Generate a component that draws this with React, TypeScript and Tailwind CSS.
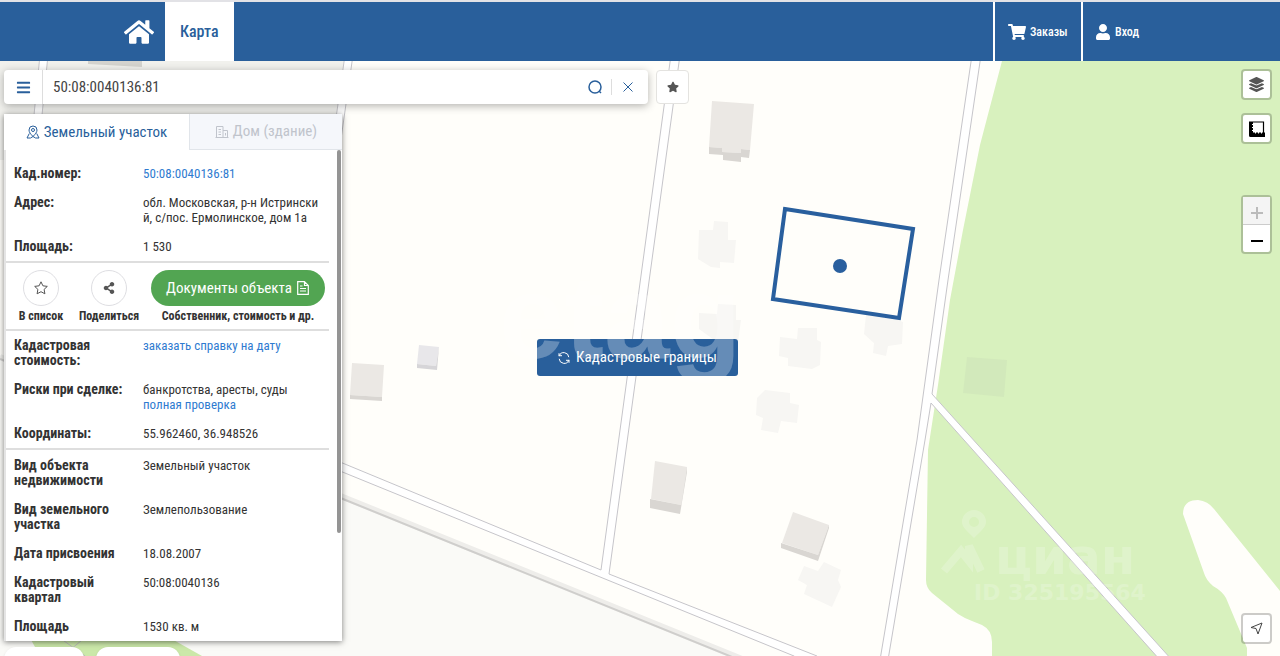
import type { ReactNode } from "react";
import { FaBars, FaHome, FaLayerGroup, FaShareAlt, FaShoppingCart, FaStar, FaUser } from "react-icons/fa";

interface Field {
  label: string;
  value: ReactNode;
}

const linkClass = "text-[#2f7bd0] hover:underline";

const mainFields: Field[] = [
  {
    label: "Кад.номер:",
    value: (
      <a href="#number" className={linkClass}>
        50:08:0040136:81
      </a>
    ),
  },
  { label: "Адрес:", value: "обл. Московская, р-н Истринский, с/пос. Ермолинское, дом 1а" },
  { label: "Площадь:", value: "1 530" },
];

const priceFields: Field[] = [
  {
    label: "Кадастровая стоимость:",
    value: (
      <a href="#price" className={linkClass}>
        заказать справку на дату
      </a>
    ),
  },
  {
    label: "Риски при сделке:",
    value: (
      <>
        банкротства, аресты, суды
        <br />
        <a href="#check" className={linkClass}>
          полная проверка
        </a>
      </>
    ),
  },
  { label: "Координаты:", value: "55.962460, 36.948526" },
];

const infoFields: Field[] = [
  { label: "Вид объекта недвижимости", value: "Земельный участок" },
  { label: "Вид земельного участка", value: "Землепользование" },
  { label: "Дата присвоения", value: "18.08.2007" },
  { label: "Кадастровый квартал", value: "50:08:0040136" },
  { label: "Площадь", value: "1530 кв. м" },
];

function FieldList({ fields }: { fields: Field[] }) {
  return (
    <dl>
      {fields.map((field) => (
        <div key={field.label} className="flex py-[7px] pl-2 text-[13px] leading-[15px]">
          <dt className="w-[129px] shrink-0 pr-2 text-sm leading-[15px] font-bold text-[#333]">{field.label}</dt>
          <dd className="w-44 break-all text-[#333]">{field.value}</dd>
        </div>
      ))}
    </dl>
  );
}

function PlotIcon() {
  return (
    <svg className="size-[14px]" viewBox="0 0 14 14" fill="none" stroke="currentColor">
      <path d="M7 11.500C4.600 9 3 7.200 3 5a4 4 0 0 1 8 0c0 2.200-1.600 4-4 6.500Z" />
      <circle cx="7" cy="5" r="1.500" />
      <path d="M3.300 8.500 1 13h3.500L7 11.500 9.500 13H13l-2.300-4.500" />
    </svg>
  );
}

function HouseIcon() {
  return (
    <svg className="size-[14px]" viewBox="0 0 14 14" fill="none" stroke="currentColor">
      <path d="M1.500 12.500v-11h6.500v11M8 5.500h4.500v7M.5 12.500h13M3.500 4.500h2.500M3.500 7h2.500M3.500 9.500h2.500M10.500 8v2.500" />
    </svg>
  );
}

function DocumentIcon() {
  return (
    <svg className="size-[14px]" viewBox="0 0 14 14" fill="none" stroke="currentColor" strokeWidth="1.200">
      <path d="M8.500.700H1.700v12.600h10.600V4.500L8.500.700v3.800h3.800M4 5h2.500M4 7.500h6M4 10h6" />
    </svg>
  );
}

function RefreshIcon() {
  return (
    <svg className="size-3" viewBox="0 0 12 12" fill="none" stroke="currentColor">
      <path d="M1 4.200V1.200M1 3.700h3M1.200 3.700A5 5 0 0 1 10.800 5.200M11 7.800v3M11 8.300H8M10.800 8.300A5 5 0 0 1 1.200 6.800" />
    </svg>
  );
}

function RulerIcon() {
  return (
    <svg className="size-4" viewBox="0 0 16 16" fill="none" stroke="currentColor">
      <path d="M0 .500h4v11h12V16H1.500A1.500 1.500 0 0 1 0 14.500Z" fill="currentColor" stroke="none" />
      <path d="M4 1h10.500v11" strokeWidth="1.200" />
      <path d="M3 3.500H4.500M3 6.500H4.500M3 9.500H4.500M6.500 11v1.500M9.500 11v1.500M12.500 11v1.500" stroke="white" />
    </svg>
  );
}

const solidRoofs = [
  "712,101 754,104 750,150 741,149 741,153 722,152 722,148 709,147",
  "352,363 384,365 382,397 350,395",
  "655,461 687,467 681,505 651,499",
  "793,512 829,525 818,555 782,543",
];

const solidWalls = [
  "709,147 722,148 722,152 741,153 741,149 750,150 749,158 741,157 741,162 723,160 723,155 709,154",
  "350,395 382,397 382,401 350,399",
  "650,499 681,505 687,467 687,472 680,514 650,508",
  "781,543 818,555 829,525 829,528 818,561 781,548",
];

const faintBuildings = [
  "714,221 728,222 728,240 736,240 734,263 720,262 720,268 711,267 698,259 699,230 713,230",
  "718,304 736,305 736,320 741,320 738,342 717,342 699,329 699,313 717,314",
  "798,328 817,328 817,340 821,342 820,365 812,369 788,366 788,358 779,356 780,337 797,339",
  "875,312 888,316 903,322 902,344 888,346 886,356 873,353 874,343 864,334 866,315",
  "765,390 790,393 790,403 799,405 797,423 781,421 778,433 761,430 763,418 756,415 757,398",
  "824,562 841,570 838,580 841,587 832,607 804,594 807,585 798,580 804,566 818,571",
];

function MapCanvas() {
  return (
    <svg
      className="absolute inset-0 size-full"
      viewBox="0 61 1280 595"
      preserveAspectRatio="xMidYMid slice"
      role="img"
      aria-label="Карта участка"
    >
      <rect y="61" width="1280" height="595" fill="#fffefa" />
      <path d="M0 355 343 497 737 656H0Z" fill="#fafaf7" />
      <path d="M0 61H345L330 160H0Z" fill="#f1f1ed" />
      <path d="M88 61H142V67L88 64Z" fill="#d4d3ce" />

      {/* Forest */}
      <path
        d="M1002 61 980 145 963 230 950 300 938 385 928 450 926 580Q926 588 932 593L958 614Q964 618 972 621L982 625Q992 630 992 642V656H1280V61Z"
        fill="#d8f1be"
      />
      <path
        d="M1183 514C1183 504 1189 500 1198 500Q1208 501 1214 509L1280 591V656H1247V648L1226 598Q1222 591 1213 586 1206 580 1204 573Z"
        fill="#fffefa"
      />
      <path d="M30 638 170 638 202 656H40Z" fill="#cbe8a9" />
      <path d="M60 638 85 656M82 640 70 650" stroke="#bbb" />

      {/* Roads */}
      <g fill="white" stroke="#c6c5ca">
        <path d="M345 55 330 160 338 160 353 55ZM40 55 34 115H42L48 55Z" />
        <path d="M340 462 601 570 671 55H680L609 574 817 656 830 670H812L794 656 340 471Z" />
        <path d="M972 55 939 280 917 440 880 660H888L925 440 931 403 1160 660H1172L932 394 948 280 981 55Z" />
      </g>
      <path d="M0 357 343 497 742 659" fill="none" stroke="#eeedea" strokeWidth="6" />
      <path d="M0 359 343 499 742 661" fill="none" stroke="#cfcecc" strokeWidth="2" />

      {/* Buildings */}
      {solidRoofs.map((points) => (
        <polygon key={points} points={points} fill="#ebe8e4" />
      ))}
      {solidWalls.map((points) => (
        <polygon key={points} points={points} fill="#d9d6d2" />
      ))}
      <polygon points="419,345 439,347 436,366 417,364" fill="#e8e7ea" />
      <polygon points="417,364 436,366 439,347 437,370 417,368" fill="#d6d5d8" />
      {faintBuildings.map((points) => (
        <polygon key={points} points={points} fill="#f7f6f3" />
      ))}
      <polygon points="967,357 1007,360 1004,397 963,393" fill="#d2e9bb" />

      {/* Selected plot */}
      <polygon points="785,209 913,229 899,318 773,299" fill="none" stroke="#295f9e" strokeWidth="4" />
      <circle cx="840" cy="266" r="7" fill="#295f9e" />
    </svg>
  );
}

function Watermark() {
  return (
    <svg
      className="pointer-events-none absolute inset-0 size-full font-['Liberation_Sans',sans-serif] font-bold"
      viewBox="0 61 1280 595"
      preserveAspectRatio="xMidYMid slice"
      fill="white"
      aria-hidden="true"
    >
      <text x="499" y="358" fontSize="118" opacity=".28">
        etag
      </text>
      <g opacity=".2" className="font-['DejaVu_Sans',sans-serif]">
        <path
          d="M974 510a12 12 0 0 1 12 12c0 5-5 9-12 16-7-7-12-11-12-16a12 12 0 0 1 12-12Zm0 7a5 5 0 1 0 0 10 5 5 0 0 0 0-10Z"
          fillRule="evenodd"
        />
        <path d="M944 571 961 551 969 561V546L981 571" fill="none" stroke="white" strokeWidth="8" />
        <text x="995" y="574" fontSize="50">
          циан
        </text>
        <text x="974" y="600" fontSize="22">
          ID 325195564
        </text>
      </g>
    </svg>
  );
}

function Header() {
  return (
    <header className="flex h-[61px] shrink-0 border-t-2 border-[#e2e2e6] bg-[#295f9b] text-white">
      <nav className="flex flex-1 pl-[124px]">
        <a href="#home" aria-label="Главная" className="flex items-center pr-[11px]">
          <FaHome className="size-[30px]" />
        </a>
        <a href="#map" className="flex items-center bg-white px-[15px] text-base font-medium text-[#295f9b]">
          Карта
        </a>
      </nav>
      <a href="#orders" className="flex w-[88px] items-center gap-1 border-l-2 border-white pl-[13px] text-xs font-medium">
        <FaShoppingCart className="size-[18px]" />
        Заказы
      </a>
      <a href="#login" className="flex w-[199px] items-center gap-1 border-l-2 border-white pl-3 text-xs font-medium">
        <FaUser className="size-4" />
        Вход
      </a>
    </header>
  );
}

function SearchBar() {
  return (
    <div className="flex gap-2">
      <form className="flex h-[34px] flex-1 items-center rounded-sm bg-white text-[#295f9b] shadow-[0_2px_8px_rgba(0,0,0,0.3)]">
        <button type="button" aria-label="Меню" className="flex h-full w-[39px] items-center justify-center border-r border-[#ddd]">
          <FaBars className="size-[15px]" />
        </button>
        <input
          aria-label="Поиск"
          defaultValue="50:08:0040136:81"
          className="min-w-0 flex-1 px-[10px] text-[15px] text-[#444] outline-none"
        />
        <button type="submit" aria-label="Найти" className="flex h-4 w-[26px] items-center justify-center border-r border-[#ddd] pr-2">
          <svg className="size-4 shrink-0" viewBox="0 0 16 16" fill="none" stroke="currentColor" strokeWidth="1.500">
            <circle cx="8" cy="8" r="6" />
            <path d="m12 12 2 2" />
          </svg>
        </button>
        <button type="button" aria-label="Очистить" className="mr-[15px] ml-[11px]">
          <svg className="size-[10px]" viewBox="0 0 10 10" stroke="currentColor">
            <path d="m.500.500 9 9m0-9-9 9" />
          </svg>
        </button>
      </form>
      <button
        type="button"
        aria-label="Избранное"
        className="flex w-[33px] items-center justify-center rounded-sm border border-[#e4e3e0] bg-white text-[#555]"
      >
        <FaStar className="size-3" />
      </button>
    </div>
  );
}

function RoundAction({ label, children }: { label: string; children: ReactNode }) {
  return (
    <button type="button" className="flex w-[68px] flex-col items-center gap-1 text-xs leading-3 font-bold">
      <span className="flex size-9 items-center justify-center rounded-full border border-[#dedee2] bg-white text-[#555]">
        {children}
      </span>
      {label}
    </button>
  );
}

function ObjectPanel() {
  return (
    <section className="mt-[10px] flex min-h-0 w-[338px] flex-1 flex-col bg-white text-[#333] shadow-[0_1px_6px_rgba(0,0,0,0.5)]">
      <div role="tablist" className="flex h-9 shrink-0 text-[15px]">
        <button type="button" role="tab" aria-selected="true" className="flex w-[185px] items-center justify-center gap-1 text-[#295f9b]">
          <PlotIcon />
          Земельный участок
        </button>
        <button
          type="button"
          role="tab"
          aria-selected="false"
          className="flex flex-1 items-center justify-center gap-1 border-b border-l border-[#e1e5ea] bg-[#f5f7fb] text-[#c0c4cc]"
        >
          <HouseIcon />
          Дом (здание)
        </button>
      </div>
      <div className="flex min-h-0 flex-1 border-l-2 border-[#e4e4e4]">
        <div className="min-w-0 flex-1 overflow-hidden pr-2">
          <div className="border-b-2 border-[#dedede] pt-[9px]">
            <FieldList fields={mainFields} />
          </div>
          <div className="flex items-start justify-between border-b-2 border-[#dedede] pt-[7px] pr-1 pb-[7px] pl-px">
            <div className="flex">
              <RoundAction label="В список">
                <svg className="size-[14px]" viewBox="0 0 14 14" fill="none" stroke="currentColor">
                  <path d="m7 .800 1.900 4 4.400.600-3.200 3 .800 4.400L7 10.700l-3.900 2.100.800-4.400-3.200-3 4.400-.600Z" />
                </svg>
              </RoundAction>
              <RoundAction label="Поделиться">
                <FaShareAlt className="size-3" />
              </RoundAction>
            </div>
            <button type="button" className="flex flex-col items-center gap-1 text-xs leading-3 font-bold">
              <span className="flex h-9 w-[174px] items-center justify-center gap-1 rounded-full bg-[#52a552] text-[15px] font-normal text-white">
                Документы объекта
                <DocumentIcon />
              </span>
              Собственник, стоимость и др.
            </button>
          </div>
          <div className="border-b-2 border-[#dedede]">
            <FieldList fields={priceFields} />
          </div>
          <div className="pt-px">
            <FieldList fields={infoFields} />
          </div>
        </div>
        <div className="mr-px h-[78%] w-1 shrink-0 rounded-full bg-[#949494]" />
      </div>
    </section>
  );
}

function MapControls() {
  const box = "flex size-[31px] items-center justify-center rounded-[4px] border-2 border-black/20 bg-white bg-clip-padding";
  return (
    <div className="flex flex-col items-end">
      <button type="button" aria-label="Слои" className={`${box} text-[#555]`}>
        <FaLayerGroup className="size-[15px]" />
      </button>
      <button type="button" aria-label="Измерить" className={`${box} mt-[13px] text-black`}>
        <RulerIcon />
      </button>
      <div className="mt-[51px] flex w-[31px] flex-col rounded-[4px] border-2 border-black/20 bg-white bg-clip-padding">
        <button type="button" disabled aria-label="Приблизить" className="flex h-7 items-center justify-center border-b border-[#ccc] bg-[#f4f4f4] pt-1 text-[#bbb]">
          <svg className="size-3" viewBox="0 0 12 12" stroke="currentColor" strokeWidth="2">
            <path d="M0 6h12M6 0v12" />
          </svg>
        </button>
        <button type="button" aria-label="Отдалить" className="flex h-[27px] items-center justify-center pt-1 text-black">
          <svg className="size-3" viewBox="0 0 12 12" stroke="currentColor" strokeWidth="2">
            <path d="M0 6h12" />
          </svg>
        </button>
      </div>
      <button type="button" aria-label="Моё местоположение" className={`${box} mt-auto text-[#444]`}>
        <svg className="size-[13px]" viewBox="0 0 13 13" fill="none" stroke="currentColor" strokeLinejoin="round">
          <path d="M12 1 1 5.500 6 6.500 8 12Z" />
        </svg>
      </button>
    </div>
  );
}

export default function App() {
  return (
    <div className="flex h-screen flex-col overflow-hidden font-['Roboto_Condensed',Roboto,sans-serif]">
      <Header />
      <main className="relative flex min-h-0 flex-1">
        <MapCanvas />
        <div className="relative flex min-w-0 flex-1 justify-between pr-2 pl-1">
          <div className="flex w-[685px] flex-col pt-[9px] pb-[15px]">
            <SearchBar />
            <ObjectPanel />
          </div>
          <div className="flex pt-2 pb-3">
            <MapControls />
          </div>
        </div>

        <div className="pointer-events-none absolute inset-0 flex items-center justify-center pr-[5px] pb-[2px]">
          <button
            type="button"
            className="pointer-events-auto flex h-[37px] items-center gap-[6px] rounded-[3px] bg-[#295f9b] px-[21px] text-[15px] text-white"
          >
            <RefreshIcon />
            Кадастровые границы
          </button>
        </div>
        <div className="absolute -bottom-2 left-1 flex gap-3">
          <div className="h-[17px] w-20 rounded-t-xl bg-white shadow" />
          <div className="h-[17px] w-[84px] rounded-t-xl bg-white shadow" />
        </div>
        <Watermark />
      </main>
    </div>
  );
}
